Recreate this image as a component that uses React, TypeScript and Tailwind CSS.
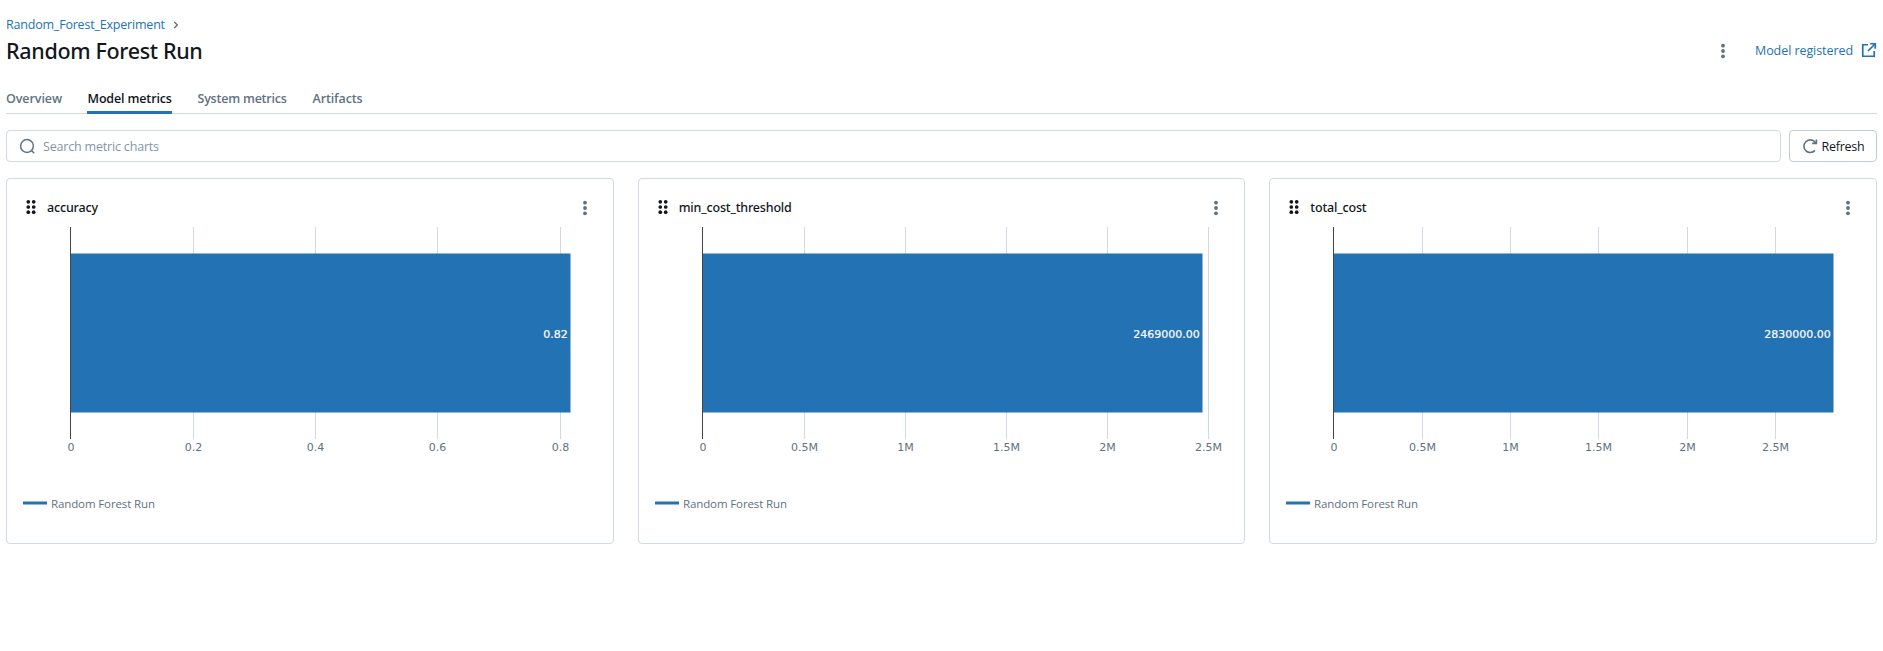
type Chart = {
  name: string;
  value: string;
  ticks: { x: number; label: string }[];
};

const charts: Chart[] = [
  {
    name: "accuracy",
    value: "0.82",
    ticks: [
      { x: 186, label: "0.2" },
      { x: 308, label: "0.4" },
      { x: 430, label: "0.6" },
      { x: 553, label: "0.8" },
    ],
  },
  {
    name: "min_cost_threshold",
    value: "2469000.00",
    ticks: [
      { x: 165, label: "0.5M" },
      { x: 266, label: "1M" },
      { x: 367, label: "1.5M" },
      { x: 468, label: "2M" },
      { x: 569, label: "2.5M" },
    ],
  },
  {
    name: "total_cost",
    value: "2830000.00",
    ticks: [
      { x: 152, label: "0.5M" },
      { x: 240, label: "1M" },
      { x: 328, label: "1.5M" },
      { x: 417, label: "2M" },
      { x: 505, label: "2.5M" },
    ],
  },
];

function KebabIcon() {
  return (
    <svg className="size-4 shrink-0 text-[#5f7281]" viewBox="0 0 16 16" fill="currentColor">
      <circle cx="8" cy="2.7" r="1.9" />
      <circle cx="8" cy="8" r="1.9" />
      <circle cx="8" cy="13.3" r="1.9" />
    </svg>
  );
}

function DragIcon() {
  return (
    <svg className="size-4 shrink-0 text-[#11171c]" viewBox="0 0 16 16" fill="currentColor">
      {[2.8, 8, 13.2].map((y) => (
        <g key={y}>
          <circle cx="5.3" cy={y} r="1.85" />
          <circle cx="10.7" cy={y} r="1.85" />
        </g>
      ))}
    </svg>
  );
}

function SearchIcon() {
  return (
    <svg className="size-4 shrink-0 text-[#5f7281]" viewBox="0 0 16 16" fill="none" stroke="currentColor" strokeWidth="1.5">
      <circle cx="8" cy="8" r="6.4" />
      <path d="M12.2 12.2 15.2 15.2" />
    </svg>
  );
}

function RefreshIcon() {
  return (
    <svg className="size-4 shrink-0 text-[#5f7281]" viewBox="0 0 16 16" fill="none" stroke="currentColor" strokeWidth="1.6">
      <path d="M12.9 12.4A6.3 6.3 0 1 1 12.5 3.6L14 5.1" />
      <path d="M14.4 1.4V5.4H10.2" />
    </svg>
  );
}

function NewWindowIcon() {
  return (
    <svg className="size-4 shrink-0" viewBox="0 0 16 16" fill="none" stroke="currentColor" strokeWidth="1.7">
      <path d="M7 2.75H1.75V14.25H13.25V9" />
      <path d="M7 9 14 2" />
      <path d="M9.2 1.75H14.25V6.8" />
    </svg>
  );
}

function BarChart({ chart }: { chart: Chart }) {
  return (
    <svg width="605" height="320" className="block shrink-0 font-['DejaVu_Sans',sans-serif] text-[11px]">
      {chart.ticks.map((t) => (
        <rect key={t.x} x={t.x} y="4" width="1" height="212" fill="#d1d9e1" shapeRendering="crispEdges" />
      ))}
      <rect x="63.5" y="30.5" width="500" height="159" fill="#2272b4" />
      <rect x="63" y="4" width="1" height="212" fill="#444444" shapeRendering="crispEdges" />
      <text x="560.8" y="115" textAnchor="end" fill="#ffffff" stroke="#ffffff" strokeWidth="0.2">
        {chart.value}
      </text>
      <g fill="#5f7281" textAnchor="middle">
        <text x="64" y="228">
          0
        </text>
        {chart.ticks.map((t) => (
          <text key={t.x} x={t.x + 0.5} y="228">
            {t.label}
          </text>
        ))}
      </g>
      <rect x="16" y="278.5" width="24" height="3" fill="#2272b4" />
      <text
        x="44"
        y="285"
        fill="#5f7281"
        className="font-['Open_Sans',sans-serif] text-[11.5px] tracking-[-0.12px]"
      >
        Random Forest Run
      </text>
    </svg>
  );
}

function ChartCard({ chart }: { chart: Chart }) {
  return (
    <section className="flex h-[366px] flex-col overflow-hidden rounded border border-[#d1d9e1] bg-white">
      <div className="mt-3 flex h-8 shrink-0 items-center gap-2 pr-5 pl-4">
        <DragIcon />
        <h2 className="grow pt-0.5 font-['Noto_Sans',sans-serif] text-[12.5px] font-medium tracking-[-0.17px] text-[#11171c]">
          {chart.name}
        </h2>
        <div className="pt-px">
          <KebabIcon />
        </div>
      </div>
      <BarChart chart={chart} />
    </section>
  );
}

export default function App() {
  return (
    <main className="min-h-[651px] bg-white px-1.5 pt-4 font-['Open_Sans',sans-serif] text-[12.5px] text-[#11171c]">
      <nav className="flex h-4 items-center gap-2 leading-4">
        <a className="pt-0.5 tracking-[-0.2px] text-[#2272b4]">Random_Forest_Experiment</a>
        <svg className="mt-0.5 h-2 w-1.5" viewBox="0 0 6 8" fill="none" stroke="#5f7281" strokeWidth="1.4">
          <path d="M1.3 1 4.3 4 1.3 7" />
        </svg>
      </nav>

      <header className="mt-[3px] flex h-[30px] items-center">
        <h1 className="grow pt-px font-['Noto_Sans',sans-serif] text-[21.5px] leading-[30px] font-medium tracking-[-0.33px]">
          Random Forest Run
        </h1>
        <div className="pt-0.5">
          <KebabIcon />
        </div>
        <a className="ml-6 flex items-center gap-2 tracking-[-0.07px] text-[#2272b4]">
          <span className="pt-0.5">Model registered</span>
          <NewWindowIcon />
        </a>
      </header>

      <div className="mt-[18px] flex h-[31px] border-b border-[#d1d9e1] leading-8 font-semibold text-[#5f7281]">
        <div className="w-[81px] tracking-[-0.08px]">Overview</div>
        <div className="w-[110.5px]">
          <div className="h-[31px] w-[85px] border-b-[3px] border-[#2272b4] pl-[0.5px] tracking-[-0.14px] whitespace-nowrap text-[#11171c]">
            Model metrics
          </div>
        </div>
        <div className="w-[115px] tracking-[-0.22px]">System metrics</div>
        <div className="tracking-[-0.12px]">Artifacts</div>
      </div>

      <div className="mt-4 flex gap-2">
        <div className="flex h-8 grow items-center gap-2 rounded border border-[#d1d9e1] px-3 tracking-[-0.18px] text-[#8396a5]">
          <SearchIcon />
          <span className="pt-0.5">Search metric charts</span>
        </div>
        <button className="flex h-8 w-[88px] items-center justify-center gap-1 rounded border border-[#c0cdd8] tracking-[-0.25px]">
          <RefreshIcon />
          <span className="pt-0.5">Refresh</span>
        </button>
      </div>

      <div className="mt-4 grid grid-cols-3 gap-6">
        {charts.map((c) => (
          <ChartCard key={c.name} chart={c} />
        ))}
      </div>
    </main>
  );
}
